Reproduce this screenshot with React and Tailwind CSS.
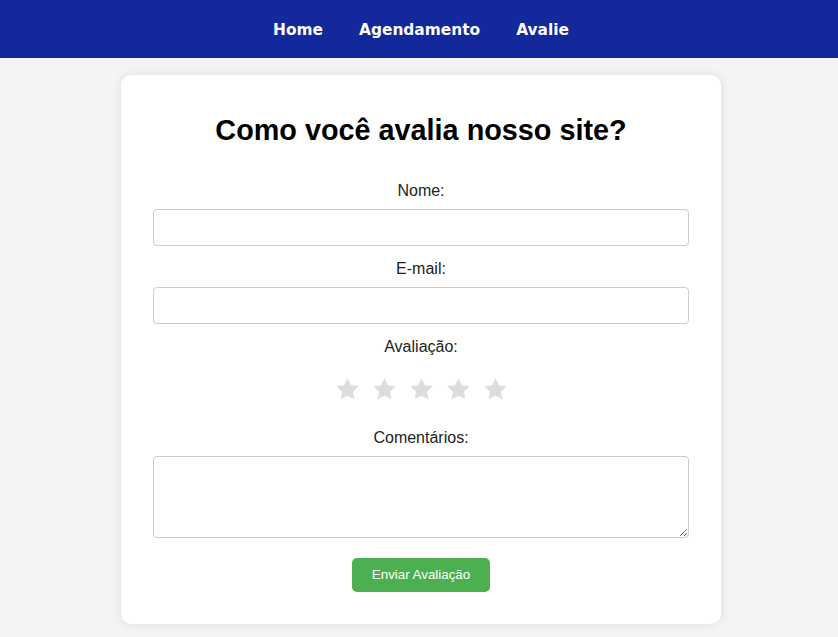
import React from "react";

function Star() {
  return (
    <svg viewBox="0 0 24 24" className="w-[25px] h-[25px]" fill="#dddddd">
      <path d="M12 1.2l3.25 6.75 7.35 1-5.35 5.15 1.35 7.3L12 17.95l-6.6 3.45 1.35-7.3L1.4 8.95l7.35-1L12 1.2z" />
    </svg>
  );
}

export default function App() {
  const sans = { fontFamily: '"Liberation Sans", Arial, sans-serif' };
  return (
    <div className="min-h-screen bg-[#f4f4f4]" style={sans}>
      <nav className="h-[58px] bg-[#13289a] flex items-center justify-center gap-[36px] pl-[4px] pt-[4px]">
        {["Home", "Agendamento", "Avalie"].map((t) => (
          <a
            key={t}
            href="#"
            className="text-white font-bold text-[15.4px] leading-none"
            style={{ fontFamily: '"DejaVu Sans", sans-serif' }}
          >
            {t}
          </a>
        ))}
      </nav>
      <div className="pt-[17px] pb-[13px] pl-[4px]">
        <div className="w-[600px] mx-auto bg-white rounded-[10px] shadow-[0_0_10px_rgba(0,0,0,0.1)] px-[32px] pt-[39px] pb-[32px]">
          <h2 className="text-[28.8px] leading-[32px] font-bold text-black text-center mb-[36px]">
            Como você avalia nosso site?
          </h2>
          <form className="flex flex-col items-stretch" onSubmit={(e) => e.preventDefault()}>
            <label className="block text-center text-[16px] leading-[18px] text-[#222] mb-[9px]">Nome:</label>
            <input type="text" className="block w-full h-[37px] border border-[#cccccc] rounded-[4px] mb-[14px] px-[10px] outline-none" />
            <label className="block text-center text-[16px] leading-[18px] text-[#222] mb-[9px]">E-mail:</label>
            <input type="email" className="block w-full h-[37px] border border-[#cccccc] rounded-[4px] mb-[14px] px-[10px] outline-none" />
            <label className="block text-center text-[16px] leading-[18px] text-[#222]">Avaliação:</label>
            <div className="flex justify-center gap-[12px] mt-[21px] mb-[27px]">
              <Star />
              <Star />
              <Star />
              <Star />
              <Star />
            </div>
            <label className="block text-center text-[16px] leading-[18px] text-[#222] mb-[9px]">Comentários:</label>
            <textarea className="block w-full h-[82px] border border-[#cccccc] rounded-[4px] p-[10px] outline-none" />
            <div className="flex justify-center mt-[20px]">
              <button
                type="submit"
                className="h-[34px] px-[20px] bg-[#4caf50] text-white text-[13.333px] rounded-[5px]"
              >
                Enviar Avaliação
              </button>
            </div>
          </form>
        </div>
      </div>
    </div>
  );
}
